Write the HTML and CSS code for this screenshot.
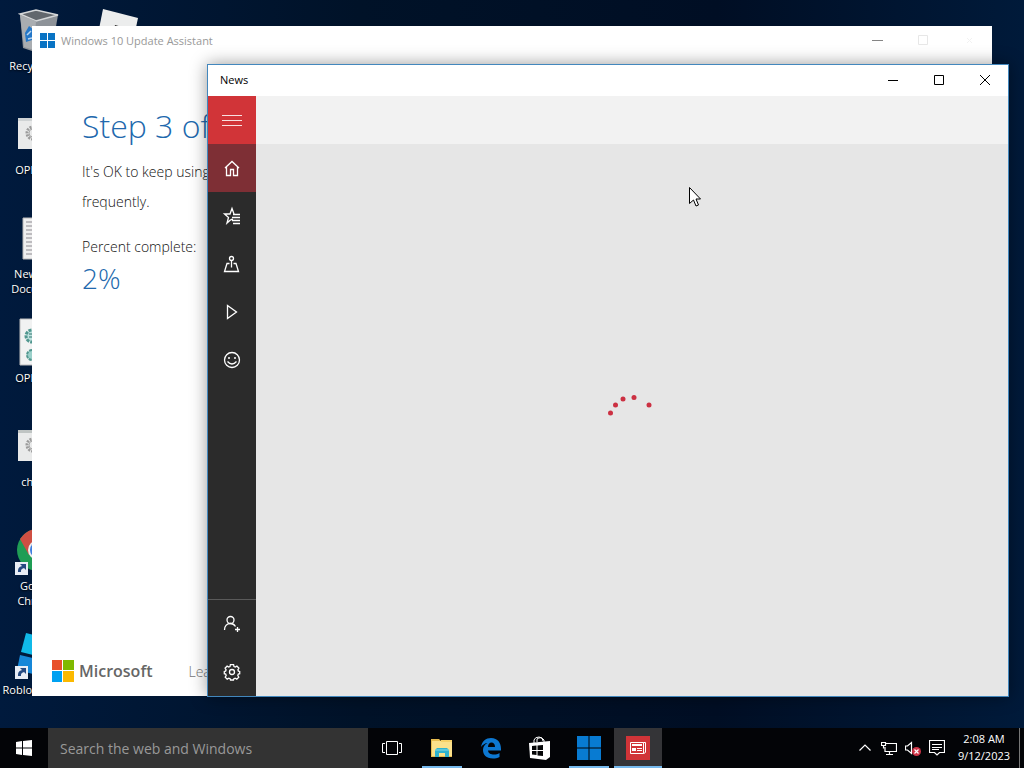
FILE: index.html
```html
<!DOCTYPE html>
<html lang="en">
<head>
<meta charset="utf-8">
<title>Desktop</title>
<link rel="stylesheet" href="styles.css">
</head>
<body>
<div class="screen">
<main class="desktop">
  <div class="shortcuts">
    <div class="shortcut">
      <svg class="shortcut-icon" viewBox="0 0 48 48" aria-hidden="true"><path d="M6 8 22 4l22 5-6 34-20 2-9-3z" fill="#8d9298"/><path d="M6 8 22 4l22 5-22 6z" fill="#62676d" stroke="#d5d7d9" stroke-width="1.5"/><path d="m6 9 16 6-2 29-10-3z" fill="#a9adb1"/><path d="m11 27 4-7 5 4-2 10-6 2z" fill="#2477c8"/><path d="m13 29 4-4M14 33l4-1" stroke="#b9d5ef" stroke-width="1.5"/></svg>
      <span class="shortcut-label">Recycle Bin</span>
    </div>
    <div class="shortcut">
      <svg class="shortcut-icon" viewBox="0 0 48 48" aria-hidden="true"><path d="M4 8h40v31H4z" fill="#e9eaea"/><path d="M4 8h40v3H4z" fill="#cfd3d4"/><circle cx="19" cy="23" r="6" fill="none" stroke="#9b9b9b" stroke-width="3" stroke-dasharray="2 1"/><circle cx="19" cy="23" r="4" fill="none" stroke="#aaa"/></svg>
      <span class="shortcut-label">OPENME</span>
    </div>
    <div class="shortcut">
      <svg class="shortcut-icon" viewBox="0 0 48 48" aria-hidden="true"><path d="M9 4h30v41H9z" fill="#efefef" stroke="#b8b8b8"/><path d="M12 8h24M12 12h24M12 16h24M12 20h24M12 24h24M12 28h24M12 32h24M12 36h24M12 40h24" stroke="#8c8990"/></svg>
      <span class="shortcut-label">New Text Document</span>
    </div>
    <div class="shortcut">
      <svg class="shortcut-icon" viewBox="0 0 48 48" aria-hidden="true"><path d="M6 1h36v46H6z" fill="#f1f2f2" stroke="#bdbdbd"/><circle cx="18" cy="18" r="6" fill="#bfe2df" stroke="#51978f" stroke-width="3" stroke-dasharray="3 1"/><circle cx="18" cy="37" r="5" fill="#9bd0ca" stroke="#51978f" stroke-width="2" stroke-dasharray="3 1"/><path d="M15 16h6M15 19h6" stroke="#31756f"/></svg>
      <span class="shortcut-label">OPENME</span>
    </div>
    <div class="shortcut">
      <svg class="shortcut-icon" viewBox="0 0 48 48" aria-hidden="true"><path d="M4 8h40v31H4z" fill="#e9eaea"/><path d="M4 8h40v3H4z" fill="#bfc4c3"/><circle cx="19" cy="23" r="6" fill="none" stroke="#9b9b9b" stroke-width="3" stroke-dasharray="2 1"/><circle cx="19" cy="23" r="4" fill="none" stroke="#aaa"/></svg>
      <span class="shortcut-label">cheats</span>
    </div>
    <div class="shortcut">
      <svg class="shortcut-icon" viewBox="0 0 48 48" aria-hidden="true"><circle cx="24" cy="24" r="21" fill="#1f9d55"/><path d="M6 13A21 21 0 0 1 44 17H24L15 29z" fill="#cf4f43"/><circle cx="24" cy="24" r="10" fill="#eee"/><circle cx="24" cy="24" r="8" fill="#3f7fe0"/><path d="M1 36h13v13H1z" fill="#e8edf5"/><path d="M4 46c0-4 1-5 4-6l-2-2h6v6l-2-2c-3 1-3 2-3 4z" fill="#264b82"/></svg>
      <span class="shortcut-label">Google Chrome</span>
    </div>
    <div class="shortcut">
      <svg class="shortcut-icon" viewBox="0 0 48 48" aria-hidden="true"><path d="m12 3 32 8-5 19L7 22z" fill="#10b9e8"/><path d="m6 25 34 8-5 15-32-8z" fill="#1687d8"/><path d="M1 36h13v13H1z" fill="#e8edf5"/><path d="M4 46c0-4 1-5 4-6l-2-2h6v6l-2-2c-3 1-3 2-3 4z" fill="#264b82"/></svg>
      <span class="shortcut-label">Roblox&nbsp;Studio</span>
    </div>
    <div class="shortcut">
      <svg class="shortcut-icon" viewBox="0 0 48 48" aria-hidden="true"><path d="m9 3 35 9-7 33-35-7z" fill="#eceded"/><path d="m21 19 7 2-2 8-7-2z" fill="#222"/></svg>
    </div>
  </div>

  <section class="window assistant" aria-label="Windows 10 Update Assistant">
    <header class="titlebar">
      <svg class="title-logo" viewBox="0 0 15 15" aria-hidden="true"><path d="M0 0h7v7H0zM8 0h7v7H8zM0 8h7v7H0zM8 8h7v7H8z" fill="#0873c4"/></svg>
      <span class="title">Windows 10 Update Assistant</span>
      <div class="controls">
        <button class="control" aria-label="Minimize"><svg viewBox="0 0 11 11"><path d="M0 5.500h11" stroke="#858585"/></svg></button>
        <button class="control" aria-label="Maximize" disabled><svg viewBox="0 0 11 11"><path d="M.5.5h9v9h-9z" fill="none" stroke="#e7e7e7"/></svg></button>
        <button class="control" aria-label="Close" disabled><svg viewBox="0 0 11 11"><path d="m3 3 5 5M8 3 3 8" stroke="#f2f2f2"/></svg></button>
      </div>
    </header>
    <div class="assistant-body">
      <h1 class="step">Step 3 of 3</h1>
      <p class="copy">It's OK to keep using<br>frequently.</p>
      <p class="percent-label">Percent complete:</p>
      <p class="percent">2%</p>
    </div>
    <footer class="assistant-footer">
      <svg class="ms-logo" viewBox="0 0 22 22" aria-hidden="true"><path d="M0 0h10v10H0z" fill="#e8502a"/><path d="M11 0h11v10H11z" fill="#7fb900"/><path d="M0 11h10v11H0z" fill="#00a1f1"/><path d="M11 11h11v11H11z" fill="#fbb900"/></svg>
      <span class="ms-name">Microsoft</span>
      <a class="learn" href="#">Learn more</a>
    </footer>
  </section>

  <section class="window news" aria-label="News">
    <header class="titlebar news-titlebar">
      <span class="title">News</span>
      <div class="controls">
        <button class="control" aria-label="Minimize"><svg viewBox="0 0 11 11"><path d="M0 6.500h10" stroke="#000"/></svg></button>
        <button class="control" aria-label="Maximize"><svg viewBox="0 0 11 11"><path d="M.5 1.500h9v9h-9z" fill="none" stroke="#000"/></svg></button>
        <button class="control" aria-label="Close"><svg viewBox="0 0 11 11"><path d="m0 1 10 10M10 1 0 11" stroke="#000"/></svg></button>
      </div>
    </header>
    <div class="news-body">
      <nav class="rail" aria-label="News sections">
        <button class="rail-button menu" aria-label="Menu"><svg viewBox="0 0 24 24"><path d="M2 7.500h20M2 12.500h20M2 17.500h20" stroke="#fff" opacity=".85"/></svg></button>
        <button class="rail-button home" aria-label="Home"><svg viewBox="0 0 24 24"><path d="m5 12 7-6.500 7 6.500M6.500 11v8.500h4v-6h3v6h4V11"/></svg></button>
        <button class="rail-button" aria-label="Interests"><svg viewBox="0 0 24 24"><path d="M11 15.500 7 19l1.500-5.500-4-3.500H10l2-5.500 2 5.500M13 10.500h7M12 13.500h8M12 16.500h8M13 19.500h7M11 15.500h2"/></svg></button>
        <button class="rail-button" aria-label="Local"><svg viewBox="0 0 24 24"><circle cx="11.500" cy="6.500" r="2"/><path d="M11.500 8.500v7M9.500 11.500H7l-2.500 8h14l-2.500-8h-2.500"/></svg></button>
        <button class="rail-button" aria-label="Videos"><svg viewBox="0 0 24 24"><path d="m7.500 5.500 9 6.500-9 6.500z"/></svg></button>
        <button class="rail-button" aria-label="Feedback"><svg viewBox="0 0 24 24"><circle cx="12" cy="12" r="7.500"/><path d="M7.500 13.500q4.500 5 9 0"/><circle cx="9" cy="10" r="1" fill="#fff" stroke="none"/><circle cx="15" cy="10" r="1" fill="#fff" stroke="none"/></svg></button>
        <button class="rail-button sign-in" aria-label="Sign in"><svg viewBox="0 0 24 24"><circle cx="10.500" cy="8" r="3.500"/><path d="M4.500 18c0-4 2.500-6.500 6-6.500 2.500 0 4 1.500 5 3M17.500 15v5M15 17.500h5"/></svg></button>
        <button class="rail-button" aria-label="Settings"><svg viewBox="0 0 24 24"><circle cx="12" cy="12" r="2.500"/><path d="m10.400 4.700-.4 1.900-1.300.5-1.600-1-2 2.100 1 1.600-.5 1.300-1.300.4v2.200l1.400.4.5 1.400-1 1.600 2 2.100 1.600-1 1.300.5.4 1.300h3l.4-1.300 1.300-.5 1.600 1 2-2.100-1-1.600.5-1.400 1.400-.4v-2.200l-1.300-.4-.5-1.300 1-1.600-2-2.100-1.600 1-1.300-.5-.4-1.900z"/></svg></button>
      </nav>
      <div class="news-page">
        <div class="news-header"></div>
        <div class="loading" role="status" aria-label="Loading">
          <svg class="spinner" viewBox="0 0 48 48" aria-hidden="true"><g fill="#cc3042"><circle cx="2.500" cy="32" r="2.500"/><circle cx="7.500" cy="24" r="2.500"/><circle cx="15" cy="18" r="2.500"/><circle cx="26" cy="16.500" r="2.500"/><circle cx="41" cy="24" r="2.500"/></g></svg>
        </div>
      </div>
    </div>
  </section>
  <svg class="cursor" viewBox="0 0 12 20" aria-hidden="true"><path d="M.5.5v16l4-3.500 2.500 6 2.500-1-2.500-6h4.500z" fill="#fff" stroke="#000"/></svg>
</main>

<footer class="taskbar">
  <button class="start" aria-label="Start"><svg viewBox="0 0 16 16"><path d="m0 2 6-1v6.500H0zM7 .9 16 0v7.500H7zM0 8.500h6V15l-6-1zM7 8.500h9V16l-9-1z" fill="#fff"/></svg></button>
  <input class="search" type="text" aria-label="Search the web and Windows" placeholder="Search the web and Windows">
  <div class="apps">
    <button class="app" aria-label="Task view"><svg viewBox="0 0 24 24"><path d="M5.500 5.500h11v13h-11zM4 7.500H1.500v9H4M18 7.500h2.500v9H18" fill="none" stroke="#fff"/></svg></button>
    <button class="app running" aria-label="File Explorer"><svg viewBox="0 0 24 24"><path d="M1 3h8l2 2h11v16H1z" fill="#e8bd50"/><path d="M2 5h20v15H2z" fill="#fce18b"/><path d="M11 4h11v2H11z" fill="#f7d168"/><path d="M5 21v-7l2-2h10l2 2v7h-4v-4H9v4z" fill="#31b4cf"/><path d="M5 14h14" stroke="#8adbe5"/></svg></button>
    <button class="app" aria-label="Microsoft Edge"><svg viewBox="0 0 24 24"><path d="M2 11C3 5 7 2 12 2c7 0 10 5 10 11v1.500H9c.3 3 3 4 6 4 2 0 4-.5 5.500-1.500v4C18.500 22 16 22.500 14 22.500c-7 0-10-4-10-8.500 0-3 1.500-5.500 4.500-7C6 7.200 4 8.500 2 11zm7 0h7c0-3-1.500-4.500-3.500-4.500S9.200 8 9 11z" fill="#0d78d2"/></svg></button>
    <button class="app" aria-label="Store"><svg viewBox="0 0 24 24"><path d="M6 7V4q1-3 5-3t4 4M9 6V3q4-3 7 1v2" fill="none" stroke="#fff"/><path d="m1 7 21-2v16l-4 3L2 22z" fill="#fff"/><path d="m4 10 4.500-.5V14H4zM9.500 9.400 15 9v5H9.500zM4 15h4.500v4L4 18.500zM9.500 15H15v5l-5.500-.6z" fill="#050607"/></svg></button>
    <button class="app running" aria-label="Update Assistant"><svg viewBox="0 0 24 24"><path d="M0 0h11.500v11.500H0zM12.500 0H24v11.500H12.500zM0 12.500h11.500V24H0zM12.500 12.500H24V24H12.500z" fill="#087bd2"/></svg></button>
    <button class="app running active" aria-label="News"><svg viewBox="0 0 24 24"><path d="M0 0h24v24H0z" fill="#d13438"/><path d="M4.500 6.500h13v11h-13zM17.500 6.500h2v9.500q-.5 1.500-2 1.500" fill="none" stroke="#fff"/><path d="M6 8h10v2H6zM6 12h4v3H6zM11 12h5v1h-5zM11 14h5v1h-5z" fill="#fff"/></svg></button>
  </div>
  <div class="tray">
    <button class="tray-button" aria-label="Show hidden icons"><svg viewBox="0 0 16 16"><path d="m2.500 10.500 5.500-5.500 5.500 5.500"/></svg></button>
    <button class="tray-button" aria-label="Network"><svg viewBox="0 0 16 16"><path d="M5 3.500h10.500v8H4V7M8.500 11.500v3M5 14.500h7M.5 2.500h4v3h-4zM2.500 5.500v3"/></svg></button>
    <button class="tray-button" aria-label="Volume muted"><svg viewBox="0 0 16 16"><path d="M.5 6v4h2l4 3.500v-11L2.500 6z"/><circle cx="11.500" cy="11.500" r="4.500" fill="#cf3447" stroke="none"/><path d="m9.500 9.500 4 4M13.500 9.500l-4 4"/></svg></button>
    <button class="tray-button" aria-label="Notifications"><svg viewBox="0 0 16 16"><path d="M.5.5h15v12h-5L8 15l-2.500-2.500h-5zM3 4.500h10M3 7.500h10M3 9.500h7"/></svg></button>
    <button class="clock"><span>2:08 AM</span><span>9/12/2023</span></button>
    <button class="show-desktop" aria-label="Show desktop"></button>
  </div>
</footer>
</div>
</body>
</html>
```
FILE: styles.css
```css
* {
  box-sizing: border-box;
}

body {
  margin: 0;
  font-family: "Open Sans", "Noto Sans", sans-serif;
  font-size: 11px;
}

button {
  border: 0;
  padding: 0;
  background: none;
  color: inherit;
  font: inherit;
}

h1, p {
  margin: 0;
}

.screen {
  display: flex;
  flex-direction: column;
  height: 100vh;
  overflow: hidden;
}

.desktop {
  position: relative;
  flex: 1;
  min-height: 0;
  background: linear-gradient(90deg, #001a3d 0, #001228 35%, #000e24 70%, #001a3a 100%);
}

.shortcuts {
  display: grid;
  grid-template-rows: repeat(7, 104px);
  grid-auto-columns: 76px;
  grid-auto-flow: column;
  gap: 0 4px;
  height: 100%;
  overflow: hidden;
  color: #fff;
}

.shortcut {
  display: flex;
  flex-direction: column;
  align-items: center;
  padding-top: 6px;
}

.shortcut-icon {
  width: 48px;
  height: 48px;
  overflow: visible;
}

.shortcut-label {
  margin-top: 4px;
  line-height: 15px;
  text-align: center;
  text-shadow: 0 1px 2px #000;
}

.window {
  position: absolute;
  display: flex;
  flex-direction: column;
  background: #fff;
}

.assistant {
  inset: 26px 32px 32px;
  overflow: hidden;
}

.news {
  inset: 64px 15px 31px 207px;
  border: 1px solid #4287bd;
  box-shadow: 0 0 16px rgba(0, 0, 0, 0.4);
}

.titlebar {
  display: flex;
  align-items: center;
  height: 30px;
  padding-bottom: 2px;
  padding-left: 8px;
  color: #999;
}

.news-titlebar {
  height: 31px;
  padding-left: 12px;
  color: #000;
}

.title-logo {
  width: 15px;
  height: 15px;
  margin-right: 6px;
}

.title {
  flex: 1;
}

.controls {
  display: flex;
  height: 100%;
}

.control {
  display: grid;
  place-items: center;
  width: 46px;
}

.control svg {
  width: 11px;
  height: 11px;
}

.assistant-body {
  flex: 1;
  padding: 48px 50px 0;
  font-size: 14px;
  font-weight: 300;
  line-height: 30px;
  color: #111;
}

.step {
  font-size: 32px;
  font-weight: 300;
  line-height: 44px;
  color: #2168ad;
  margin-bottom: 9px;
}

.percent-label {
  margin-top: 15px;
}

.percent {
  font-size: 28px;
  line-height: 32px;
  color: #2168ad;
}

.assistant-footer {
  display: flex;
  align-items: center;
  height: 50px;
  padding-left: 20px;
}

.ms-logo {
  width: 22px;
  height: 22px;
  margin-right: 5px;
}

.ms-name {
  font-size: 16px;
  font-weight: 600;
  color: #666;
}

.learn {
  margin-left: 36px;
  font-size: 14px;
  font-weight: 300;
  color: #777;
  text-decoration: none;
}

.news-body {
  display: flex;
  flex: 1;
  min-height: 0;
}

.rail {
  display: flex;
  flex-direction: column;
  width: 48px;
  background: #2b2b2b;
}

.rail-button {
  display: grid;
  place-items: center;
  height: 48px;
}

.rail-button svg {
  width: 24px;
  height: 24px;
  fill: none;
  stroke: #fff;
  stroke-width: 1.3;
}

.rail .menu svg {
  stroke-width: 1;
}

.menu {
  background: #d13438;
}

.home {
  background: #7e2f35;
}

.sign-in {
  height: 49px;
  margin-top: auto;
  border-top: 1px solid #5a5a5a;
}

.news-page {
  display: flex;
  flex: 1;
  flex-direction: column;
  background: #e6e6e6;
}

.news-header {
  height: 48px;
  background: #f2f2f2;
}

.loading {
  display: grid;
  flex: 1;
  place-items: center;
  padding-bottom: 30px;
}

.spinner {
  width: 48px;
  height: 48px;
}

.cursor {
  position: absolute;
  top: 187px;
  left: 689px;
  width: 12px;
  height: 20px;
}

.taskbar {
  display: flex;
  height: 40px;
  background: #030407;
  color: #fff;
}

.start {
  display: grid;
  place-items: center;
  width: 48px;
}

.start svg {
  width: 16px;
  height: 16px;
}

.search {
  width: 320px;
  min-width: 0;
  padding: 0 12px;
  border: 0;
  border-radius: 0;
  background: #333;
  color: #fff;
  font: 14px "Open Sans", "Noto Sans", sans-serif;
}

.search::placeholder {
  color: #999;
  opacity: 1;
}

.apps {
  display: flex;
  flex: 1;
  gap: 1px;
  padding-left: 1px;
}

.app {
  display: grid;
  place-items: center;
  width: 48px;
  border: solid transparent;
  border-width: 0 4px;
}

.app svg {
  width: 24px;
  height: 24px;
}

.running {
  background: linear-gradient(#76b9ed, #76b9ed) bottom / 100% 2px no-repeat padding-box;
}

.active {
  border-width: 0;
  background-color: #343437;
}

.tray {
  display: flex;
}

.tray-button {
  display: grid;
  place-items: center;
  width: 24px;
}

.tray-button svg {
  width: 16px;
  height: 16px;
  fill: none;
  stroke: #fff;
  stroke-width: 1.2;
}

.clock {
  display: flex;
  flex-direction: column;
  align-items: center;
  justify-content: center;
  width: 70px;
  padding-bottom: 2px;
  line-height: 17px;
}

.show-desktop {
  width: 5px;
  border-left: 1px solid #777;
}
```
